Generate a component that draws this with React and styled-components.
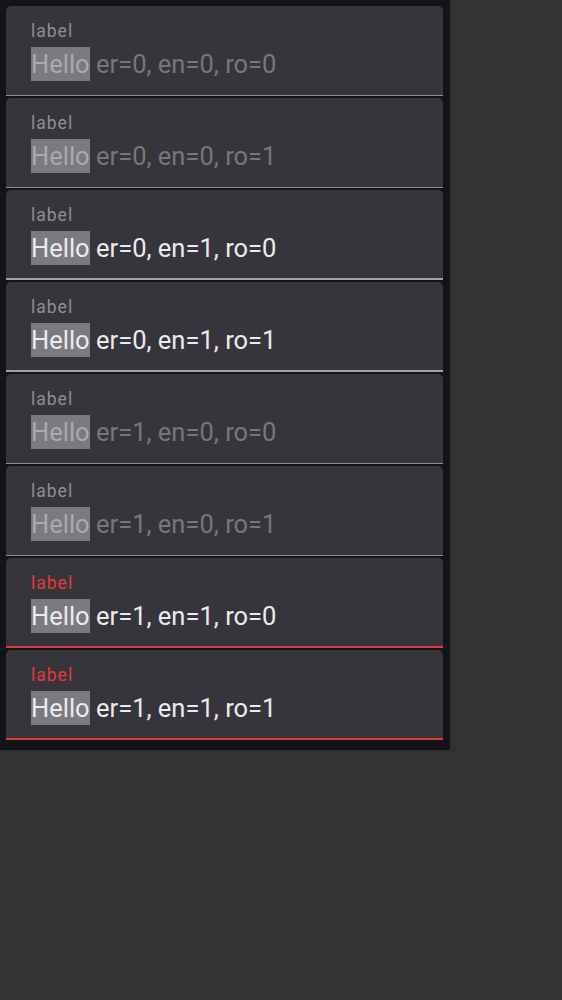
import React from "react";
import styled, { createGlobalStyle } from "styled-components";

const GlobalStyle = createGlobalStyle`
  body {
    margin: 0;
    background: #313131;
    font-family: Roboto, "Liberation Sans", sans-serif;
  }
`;

const Panel = styled.div`
  width: 450px;
  height: 750px;
  box-sizing: border-box;
  background: #121419;
  padding: 6px 7px 0 6px;
  display: flex;
  flex-direction: column;
  gap: 2px;
`;

const Field = styled.div`
  height: 90px;
  box-sizing: border-box;
  background: #36353b;
  border-radius: 5px 5px 0 0;
  border-bottom: ${(p) => (p.$enabled ? "2px" : "1px")} solid
    ${(p) => (p.$error && p.$enabled ? "#e2393b" : p.$enabled ? "#9ea4ab" : "#8c8c92")};
  padding: 14px 25px 0;
  display: flex;
  flex-direction: column;
`;

const Label = styled.div`
  font-size: 17.5px;
  line-height: 22px;
  letter-spacing: 1px;
  color: ${(p) => (p.$error && p.$enabled ? "#e2393b" : "#8e8e94")};
`;

const Value = styled.div`
  font-size: 25.5px;
  line-height: 34px;
  height: 34px;
  margin-top: 5px;
  color: ${(p) => (p.$enabled ? "#ebebef" : "#77767c")};
  white-space: nowrap;
`;

const Selected = styled.span`
  display: inline-block;
  height: 34px;
  vertical-align: top;
  background: #7b7a80;
  color: ${(p) => (p.$enabled ? "#ebebef" : "#a9a9ae")};
`;

const states = [
  [0, 0, 0],
  [0, 0, 1],
  [0, 1, 0],
  [0, 1, 1],
  [1, 0, 0],
  [1, 0, 1],
  [1, 1, 0],
  [1, 1, 1],
];

export default function App() {
  return (
    <>
      <GlobalStyle />
      <Panel>
        {states.map(([er, en, ro]) => (
          <Field key={`${er}${en}${ro}`} $error={!!er} $enabled={!!en}>
            <Label $error={!!er} $enabled={!!en}>
              label
            </Label>
            <Value $enabled={!!en}>
              <Selected $enabled={!!en}>Hello</Selected> er={er}, en={en}, ro={ro}
            </Value>
          </Field>
        ))}
      </Panel>
    </>
  );
}
